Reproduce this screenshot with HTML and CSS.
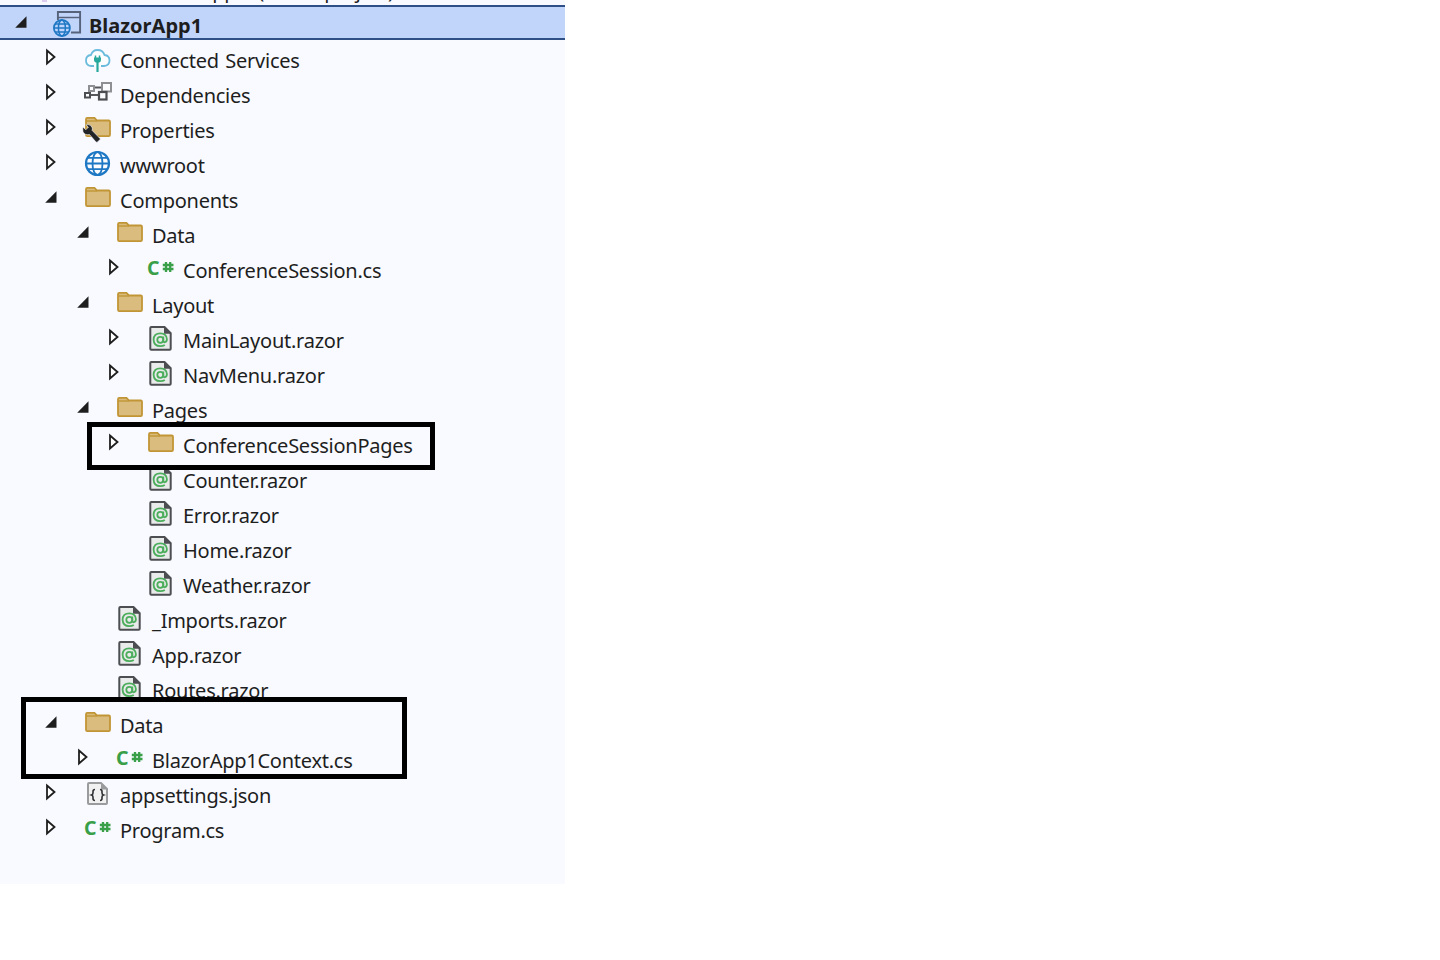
FILE: index.html
```html
<!DOCTYPE html>
<html lang="en">
<head>
<meta charset="utf-8">
<title>Solution Explorer</title>
<link rel="stylesheet" href="styles.css">
</head>
<body>
<svg class="defs" width="0" height="0" aria-hidden="true">
  <defs>
    <symbol id="open" viewBox="0 0 14 16"><path d="M12.500 2.200V13.800H1.200Z" fill="#1e1e1e"/></symbol>
    <symbol id="closed" viewBox="0 0 14 16"><path d="M3 1.500 10.500 8 3 14.500Z" fill="#fff" stroke="#1e1e1e" stroke-width="1.800"/></symbol>
    <symbol id="folder" viewBox="0 0 26 30"><path d="M1 5.200Q1 3.900 2.300 3.900H9.500L12 6.500H23.700Q25 6.500 25 7.800V20.800Q25 22.100 23.700 22.100H2.300Q1 22.100 1 20.800Z" fill="#d9bc7e" stroke="#c19535" stroke-width="1.800"/><path d="M1.500 7H12" stroke="#c19535" stroke-width="1.400" fill="none"/></symbol>
    <symbol id="cs" viewBox="0 0 26 30"><text x="-1" y="21" class="cs-c">C</text><path d="M18 8V18M22.200 8V18M14.800 11H25.500M14.800 15H25.500" stroke="#3a9f49" stroke-width="2.300" fill="none"/></symbol>
    <symbol id="razor" viewBox="0 0 26 30"><path d="M2.300 4Q2.300 3 3.300 3H16.500L22.700 9.200V24.700Q22.700 25.700 21.700 25.700H3.300Q2.300 25.700 2.300 24.700Z" fill="#e9eaea" stroke="#4c4e52" stroke-width="2"/><path d="M16 3V9.700H22.700Z" fill="#4c4e52"/><circle cx="12.300" cy="15.800" r="3" fill="none" stroke="#4cae5c" stroke-width="1.800"/><path d="M15.300 12.500V16.500Q15.400 18.500 17 18.200Q19 17.700 18.900 15Q18.500 9.300 12.300 9.300Q5.800 9.300 5.600 15.600Q5.800 22.200 12.300 22.200Q15 22.200 16.800 21" fill="none" stroke="#4cae5c" stroke-width="1.800"/></symbol>
    <symbol id="json" viewBox="0 0 26 30"><path d="M3 5Q3 4 4 4H16L22 10V24Q22 25 21 25H4Q3 25 3 24Z" fill="#f1f1f1" stroke="#9a9b9d" stroke-width="2"/><path d="M16 4V10.500H22Z" fill="#9a9b9d"/><path d="M10 10.500Q8 10.500 8 12.500V14Q8 15.500 6.500 16Q8 16.500 8 18V19.500Q8 21.500 10 21.500M15 10.500Q17 10.500 17 12.500V14Q17 15.500 18.500 16Q17 16.500 17 18V19.500Q17 21.500 15 21.500" fill="none" stroke="#2f3033" stroke-width="1.600"/></symbol>
    <symbol id="globe" viewBox="0 0 26 30"><circle cx="12.500" cy="14.500" r="11.500" fill="#fdfdff" stroke="#1f78c4" stroke-width="2.200"/><ellipse cx="12.500" cy="14.500" rx="5" ry="11.500" fill="none" stroke="#1f78c4" stroke-width="1.800"/><path d="M1 14.500H24M3 8.800H22M3 20.200H22" stroke="#1f78c4" stroke-width="1.800" fill="none"/></symbol>
    <symbol id="project" viewBox="0 0 30 30"><path d="M5.900 13V5H28.100V25.500H19" fill="none" stroke="#56627a" stroke-width="1.900"/><path d="M6 10.500H28" stroke="#56627a" stroke-width="1.500" fill="none"/><circle cx="9.900" cy="21" r="8" fill="#c1d5fb" stroke="#1f78c4" stroke-width="1.800"/><ellipse cx="9.900" cy="21" rx="3.500" ry="8" fill="none" stroke="#1f78c4" stroke-width="1.500"/><path d="M2 21H18M3 17H17M3 25H17" stroke="#1f78c4" stroke-width="1.500" fill="none"/></symbol>
    <symbol id="cloud" viewBox="0 0 26 30"><path d="M9 22H6Q1 21.500 1 16.500Q1 11.500 6 11Q7.500 6 12.500 6Q18 6 19.500 11Q24.500 11.500 24.500 16.500Q24.500 21.500 19 22H16" fill="#fbfdff" stroke="#6bbbdd" stroke-width="1.800"/><path d="M10.500 11.500V14M14.500 11.500V14" stroke="#27a89c" stroke-width="1.500" fill="none"/><path d="M9 13.500H16V15.500Q16 18.800 12.500 18.800Q9 18.800 9 15.500Z" fill="#27a89c"/><path d="M12.500 18V28" stroke="#27a89c" stroke-width="2.200" fill="none"/></symbol>
    <symbol id="deps" viewBox="0 0 26 30"><path d="M5 16H13M9 8.500H16" fill="none" stroke="#55575a" stroke-width="1.800"/><rect x="4" y="7" width="5" height="5" fill="#fbfcff" stroke="#8d8f92" stroke-width="2"/><rect x="17" y="4" width="9" height="8.500" fill="#fbfcff" stroke="#8d8f92" stroke-width="2"/><rect x="0" y="14" width="5" height="4.500" fill="#fbfcff" stroke="#4b4d50" stroke-width="2"/><rect x="14" y="13" width="7.500" height="7.500" fill="#fbfcff" stroke="#4b4d50" stroke-width="2.200"/></symbol>
    <symbol id="props" viewBox="0 0 26 30"><path d="M1 5.200Q1 3.900 2.300 3.900H9.500L12 6.500H23.700Q25 6.500 25 7.800V20.800Q25 22.100 23.700 22.100H2.300Q1 22.100 1 20.800Z" fill="#d9bc7e" stroke="#c19535" stroke-width="1.800"/><path d="M1.500 7H12" stroke="#c19535" stroke-width="1.400" fill="none"/><path d="M-2 13 .8 15.800 3.400 13.200 .8 10.800Q4 10 6.300 12Q8 14 7.200 16.500L15.500 25 12.500 28Q12 28.500 11 28L4.500 20.500Q0 21.500-2 18Q-2.500 15-2 13Z" fill="#222426" stroke="#f8faff" stroke-width=".6"/></symbol>
  </defs>
</svg>
<main class="tree">
  <div class="clip-line"><span class="solution-mark"></span><span class="label solution-label">Solution 'BlazorApp1' (1 of 1 project)</span></div>
  <div class="row root depth-0">
    <svg class="arrow"><use href="#open"/></svg>
    <svg class="icon icon-project"><use href="#project"/></svg>
    <span class="label">BlazorApp1</span>
  </div>
  <div class="row depth-1"><svg class="arrow"><use href="#closed"/></svg><svg class="icon"><use href="#cloud"/></svg><span class="label">Connected Services</span></div>
  <div class="row depth-1"><svg class="arrow"><use href="#closed"/></svg><svg class="icon"><use href="#deps"/></svg><span class="label">Dependencies</span></div>
  <div class="row depth-1"><svg class="arrow"><use href="#closed"/></svg><svg class="icon"><use href="#props"/></svg><span class="label">Properties</span></div>
  <div class="row depth-1"><svg class="arrow"><use href="#closed"/></svg><svg class="icon"><use href="#globe"/></svg><span class="label">wwwroot</span></div>
  <div class="row depth-1"><svg class="arrow"><use href="#open"/></svg><svg class="icon"><use href="#folder"/></svg><span class="label">Components</span></div>
  <div class="row depth-2"><svg class="arrow"><use href="#open"/></svg><svg class="icon"><use href="#folder"/></svg><span class="label">Data</span></div>
  <div class="row depth-3"><svg class="arrow"><use href="#closed"/></svg><svg class="icon"><use href="#cs"/></svg><span class="label">ConferenceSession.cs</span></div>
  <div class="row depth-2"><svg class="arrow"><use href="#open"/></svg><svg class="icon"><use href="#folder"/></svg><span class="label">Layout</span></div>
  <div class="row depth-3"><svg class="arrow"><use href="#closed"/></svg><svg class="icon"><use href="#razor"/></svg><span class="label">MainLayout.razor</span></div>
  <div class="row depth-3"><svg class="arrow"><use href="#closed"/></svg><svg class="icon"><use href="#razor"/></svg><span class="label">NavMenu.razor</span></div>
  <div class="row depth-2"><svg class="arrow"><use href="#open"/></svg><svg class="icon"><use href="#folder"/></svg><span class="label">Pages</span></div>
  <div class="row depth-3"><svg class="arrow"><use href="#closed"/></svg><svg class="icon"><use href="#folder"/></svg><span class="label">ConferenceSessionPages</span></div>
  <div class="row depth-3"><span class="arrow"></span><svg class="icon"><use href="#razor"/></svg><span class="label">Counter.razor</span></div>
  <div class="row depth-3"><span class="arrow"></span><svg class="icon"><use href="#razor"/></svg><span class="label">Error.razor</span></div>
  <div class="row depth-3"><span class="arrow"></span><svg class="icon"><use href="#razor"/></svg><span class="label">Home.razor</span></div>
  <div class="row depth-3"><span class="arrow"></span><svg class="icon"><use href="#razor"/></svg><span class="label">Weather.razor</span></div>
  <div class="row depth-2"><span class="arrow"></span><svg class="icon"><use href="#razor"/></svg><span class="label">_Imports.razor</span></div>
  <div class="row depth-2"><span class="arrow"></span><svg class="icon"><use href="#razor"/></svg><span class="label">App.razor</span></div>
  <div class="row depth-2"><span class="arrow"></span><svg class="icon"><use href="#razor"/></svg><span class="label">Routes.razor</span></div>
  <div class="row depth-1"><svg class="arrow"><use href="#open"/></svg><svg class="icon"><use href="#folder"/></svg><span class="label">Data</span></div>
  <div class="row depth-2"><svg class="arrow"><use href="#closed"/></svg><svg class="icon"><use href="#cs"/></svg><span class="label">BlazorApp1Context.cs</span></div>
  <div class="row depth-1"><svg class="arrow"><use href="#closed"/></svg><svg class="icon"><use href="#json"/></svg><span class="label">appsettings.json</span></div>
  <div class="row depth-1"><svg class="arrow"><use href="#closed"/></svg><svg class="icon"><use href="#cs"/></svg><span class="label">Program.cs</span></div>
  <div class="highlight highlight-pages"></div>
  <div class="highlight highlight-data"></div>
</main>
</body>
</html>
```
FILE: styles.css
```css
* { box-sizing: border-box; }
html, body { margin: 0; padding: 0; background: #fff; }
body { font-family: "Noto Sans", "Open Sans", sans-serif; color: #1e1e1e; }
.defs { position: absolute; }
symbol { overflow: visible; }
.tree { position: relative; width: 565px; height: 884px; background: #f8faff; overflow: hidden; font-size: 20px; }
.clip-line { display: flex; align-items: flex-start; height: 5px; overflow: hidden; white-space: nowrap; }
.solution-mark { flex: none; width: 5px; height: 2px; margin-left: 42px; background: #dccdf0; }
.solution-label { margin-top: -27px; margin-left: 9px; }
.row { display: flex; align-items: flex-start; height: 35px; white-space: nowrap; }
.root { background: #c1d5fb; border-top: 2px solid #2f4f87; border-bottom: 2px solid #2f4f87; font-weight: 700; }
.depth-0 { padding-left: 13.500px; }
.depth-1 { padding-left: 44px; }
.depth-2 { padding-left: 76px; }
.depth-3 { padding-left: 107px; }
.arrow { display: block; flex: none; width: 14px; height: 16px; margin-top: 8.500px; margin-right: 27px; overflow: visible; }
.icon { display: block; flex: none; width: 26px; height: 30px; margin-top: 4px; margin-right: 9px; overflow: visible; }
.row > .label { margin-top: 3px; }
.root .arrow { margin-top: 7px; margin-right: 24px; }
.root .icon-project { width: 30px; margin-top: 0; margin-right: 7.500px; }
.root > .label { margin-top: 1px; letter-spacing: 0; }
.label { display: block; line-height: 35px; letter-spacing: -0.250px; word-spacing: 1.500px; }
.cs-c { font-family: "Noto Sans", sans-serif; font-size: 19.500px; font-weight: 700; fill: #3a9f49; }
.highlight { position: absolute; border: 5px solid #000; }
.highlight-pages { left: 87px; top: 422px; width: 348px; height: 48px; }
.highlight-data { left: 21px; top: 697px; width: 386px; height: 82px; }
```
